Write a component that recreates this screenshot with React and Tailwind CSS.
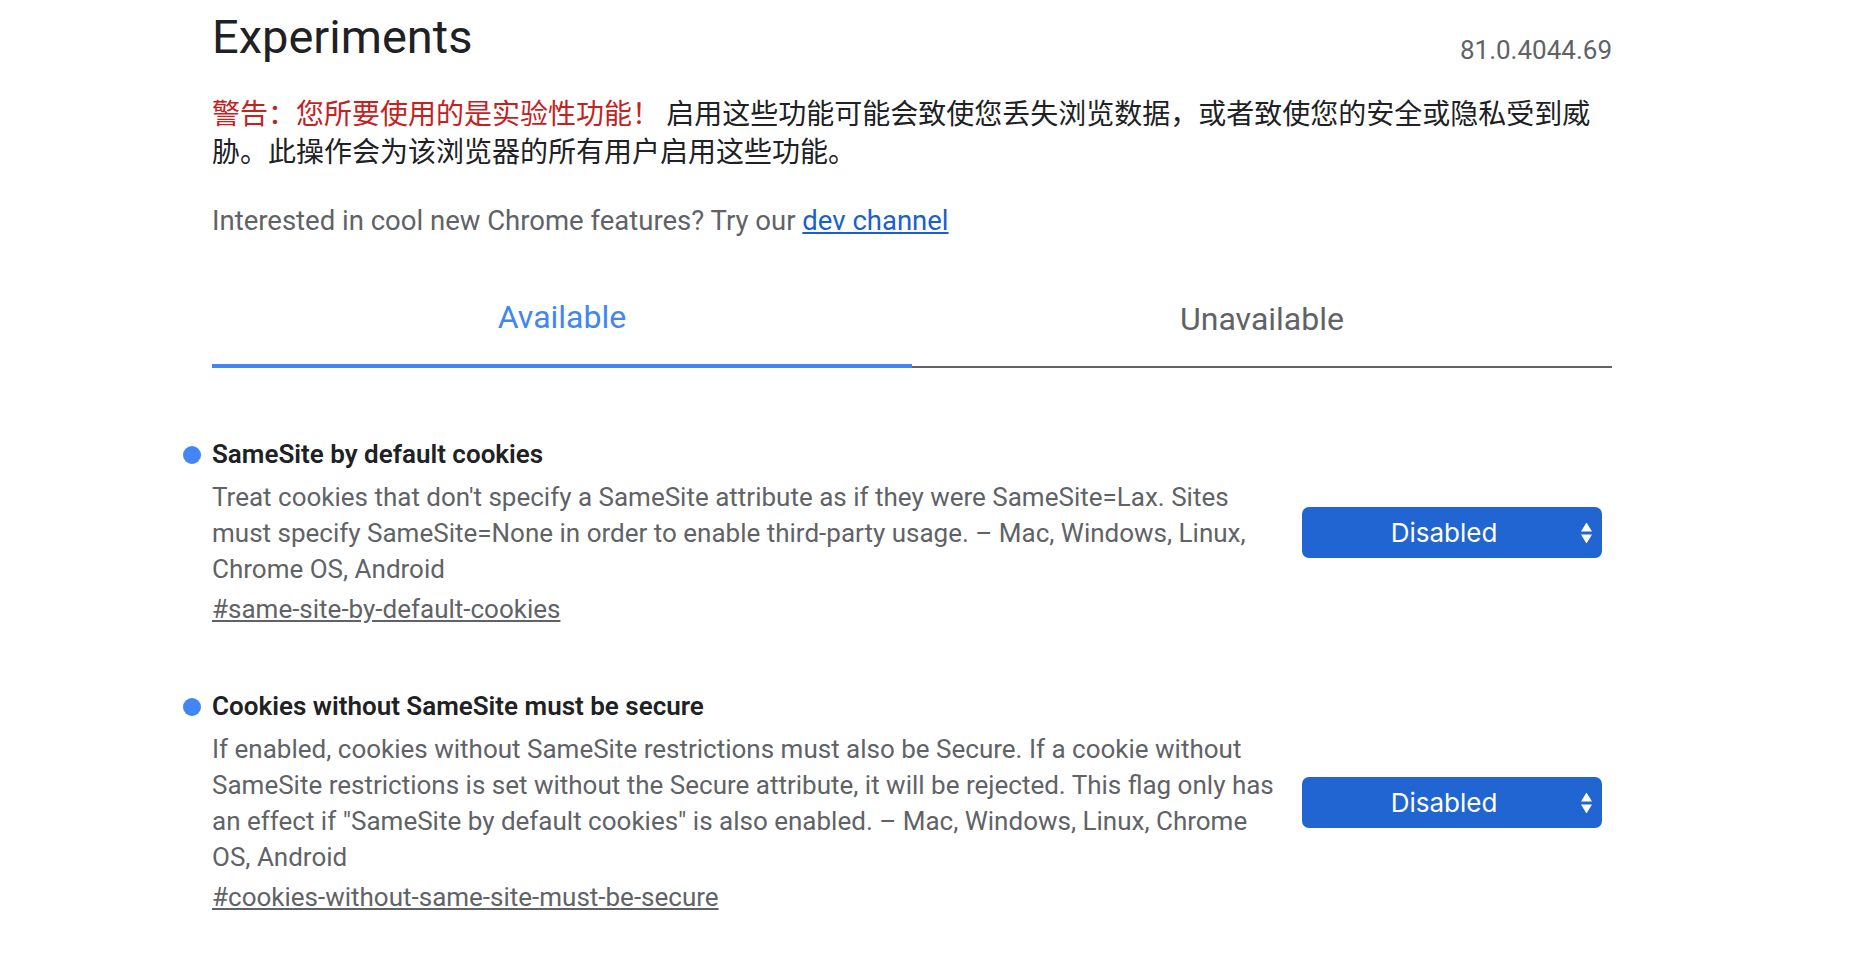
import React from 'react';

const flags = [
    {
        id: 'same-site-by-default-cookies',
        name: 'SameSite by default cookies',
        description:
            "Treat cookies that don't specify a SameSite attribute as if they were SameSite=Lax. Sites must specify SameSite=None in order to enable third-party usage. – Mac, Windows, Linux, Chrome OS, Android",
        value: 'Disabled',
    },
    {
        id: 'cookies-without-same-site-must-be-secure',
        name: 'Cookies without SameSite must be secure',
        description:
            'If enabled, cookies without SameSite restrictions must also be Secure. If a cookie without SameSite restrictions is set without the Secure attribute, it will be rejected. This flag only has an effect if "SameSite by default cookies" is also enabled. – Mac, Windows, Linux, Chrome OS, Android',
        value: 'Disabled',
    },
];

// Select azul estilo macOS
const FlagSelect = ({ value }) => (
    <div className="relative flex h-[51px] w-[300px] items-center justify-center rounded-[7px] bg-[#2065d1] pr-[16px] font-['Inter','Liberation_Sans',sans-serif] text-[26px] text-white">
        {value}
        <svg
            className="absolute right-[10px] top-1/2 -translate-y-1/2"
            width="11"
            height="21"
            viewBox="0 0 11 21"
        >
            <polygon points="0,9 5.5,0 11,9" fill="white" />
            <polygon points="0,12 5.5,21 11,12" fill="white" />
        </svg>
    </div>
);

const FlagItem = ({ flag }) => (
    <div className="flex items-center">
        <div className="relative flex-1">
            <span className="absolute left-[-29px] top-[8px] h-[18px] w-[18px] rounded-full bg-[#4285f4]" />
            <h2 className="text-[26px] font-semibold leading-[32px] text-[#202124]">{flag.name}</h2>
            <p className="mt-[9px] text-[26px] leading-[36px] text-[#5f6368]">{flag.description}</p>
            <a href={'#' + flag.id} className="mt-[4px] block text-[26px] leading-[36px] text-[#5f6368] underline">
                #{flag.id}
            </a>
        </div>
        <div className="ml-[22px] mr-[10px]">
            <FlagSelect value={flag.value} />
        </div>
    </div>
);

export default function App() {
    return (
        <div className="min-h-screen bg-white font-['Roboto','Noto_Sans_CJK_SC',sans-serif]">
            <div className="ml-[212px] w-[1400px]">
                {/* CABECERA */}
                <header className="flex items-start justify-between">
                    <h1 className="pt-[9px] text-[47px] font-normal leading-[56px] text-[#202124]">Experiments</h1>
                    <span className="mt-[34px] text-[26px] leading-[32px] text-[#5f6368]">81.0.4044.69</span>
                </header>

                <p className="mt-[27px] font-['Noto_Sans_CJK_SC',sans-serif] text-[28px] leading-[38px] text-[#202124]">
                    <span className="text-[#c5221f]">警告：您所要使用的是实验性功能！</span>{' '}
                    <span>启用这些功能可能会致使您丢失浏览数据，或者致使您的安全或隐私受到威胁。此操作会为该浏览器的所有用户启用这些功能。</span>
                </p>

                <p className="mt-[34px] text-[27.5px] leading-[36px] text-[#5f6368]">
                    Interested in cool new Chrome features? Try our{' '}
                    <a href="#dev" className="text-[#1a5fd0] underline">
                        dev channel
                    </a>
                </p>

                {/* PESTAÑAS */}
                <div className="mt-[58px] flex items-end">
                    <div className="w-1/2 border-b-4 border-[#4285f4] pb-[27px] text-center text-[32px] leading-[40px] text-[#4285f4]">
                        Available
                    </div>
                    <div className="w-1/2 border-b-2 border-[#5f6368] pb-[27px] text-center text-[32px] leading-[40px] text-[#5f6368]">
                        Unavailable
                    </div>
                </div>

                {/* EXPERIMENTOS */}
                <div className="mt-[70px] flex flex-col gap-[63px]">
                    {flags.map((flag) => (
                        <FlagItem key={flag.id} flag={flag} />
                    ))}
                </div>
            </div>
        </div>
    );
}
